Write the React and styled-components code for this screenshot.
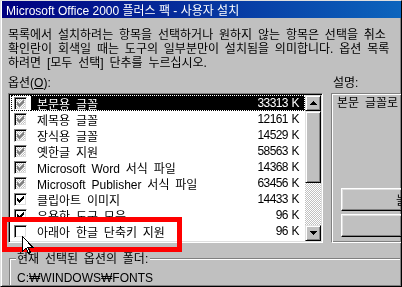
import styled, { createGlobalStyle, css } from "styled-components";

const GlobalStyle = createGlobalStyle`
  html, body {
    margin: 0;
    padding: 0;
    background: #c0c0c0;
  }
  body {
    font-family: "Liberation Sans", "Noto Sans CJK KR", sans-serif;
    font-size: 12px;
    color: #000;
  }
`;

const items = [
  { name: "본문용 글꼴", size: "33313 K", state: "gray", selected: true },
  { name: "제목용 글꼴", size: "12161 K", state: "gray" },
  { name: "장식용 글꼴", size: "14529 K", state: "gray" },
  { name: "옛한글 지원", size: "58563 K", state: "gray" },
  { name: "Microsoft Word 서식 파일", size: "14368 K", state: "gray" },
  { name: "Microsoft Publisher 서식 파일", size: "63456 K", state: "gray" },
  { name: "클립아트 이미지", size: "14433 K", state: "on" },
  { name: "유용한 도구 모음", size: "96 K", state: "on" },
  { name: "아래아 한글 단축키 지원", size: "96 K", state: "off" },
];

const raised = css`
  border: 1px solid;
  border-color: #dfdfdf #000 #000 #dfdfdf;
  box-shadow: inset 1px 1px #fff, inset -1px -1px #808080;
`;

const Window = styled.div`
  position: relative;
  width: 402px;
  height: 287px;
  box-sizing: border-box;
  background: #c0c0c0;
  border: 1px solid;
  border-color: #dfdfdf #000 #000 #dfdfdf;
  box-shadow: inset 1px 1px #fff, inset -1px -1px #808080;
  padding: 1px;
  overflow: hidden;
  display: flex;
  flex-direction: column;
`;

const TitleBar = styled.div`
  flex-shrink: 0;
  width: 520px;
  height: 17px;
  margin-top: -1px;
  display: flex;
  align-items: center;
  padding-left: 4px;
  background: linear-gradient(to right, #000080, #1084d0);
  color: #fff;
  font-size: 12px;
  white-space: nowrap;
`;

const Body = styled.div`
  flex: 1;
  padding: 10px 0 0 6px;
  display: flex;
  flex-direction: column;
  white-space: nowrap;
  word-spacing: 2.5px;
`;

const Intro = styled.div`
  line-height: 14px;
`;

const Columns = styled.div`
  display: flex;
  margin-top: 6px;
`;

const LeftCol = styled.div`
  width: 315px;
  flex-shrink: 0;
  display: flex;
  flex-direction: column;
`;

const RightCol = styled.div`
  width: 170px;
  flex-shrink: 0;
  margin-left: 8px;
  display: flex;
  flex-direction: column;
`;

const Label = styled.div`
  line-height: 14px;
  margin-bottom: 3px;
  padding-left: ${(p) => p.$indent || 0}px;
`;

const Key = styled.span`
  text-decoration: underline;
`;

const ListBox = styled.div`
  height: 150px;
  box-sizing: border-box;
  display: flex;
  border: 1px solid;
  border-color: #808080 #fff #fff #808080;
  box-shadow: inset 1px 1px #000, inset -1px -1px #dfdfdf;
  padding: 1px;
  background: #fff;
`;

const Rows = styled.div`
  flex: 1;
  display: flex;
  flex-direction: column;
`;

const Row = styled.div`
  position: relative;
  height: 16px;
  display: flex;
  align-items: center;
  ${(p) =>
    p.$selected &&
    css`
      &::after {
        content: "";
        position: absolute;
        inset: 0 0 0 1px;
        border: 1px dotted #fff;
        mix-blend-mode: difference;
      }
    `}
`;

const CheckCell = styled.div`
  width: 17px;
  height: 16px;
  padding-left: 4px;
  display: flex;
  align-items: center;
`;

const TextCell = styled.div`
  flex: 1;
  height: 16px;
  display: flex;
  align-items: center;
  justify-content: space-between;
  padding: 0 6px;
  background: ${(p) => (p.$selected ? "#000" : "transparent")};
  color: ${(p) => (p.$selected ? "#fff" : "#000")};
`;

const Size = styled.span`
  letter-spacing: -0.6px;
  word-spacing: 1px;
`;

const hatch = css`
  background-image: repeating-conic-gradient(#c0c0c0 0 25%, #fff 0 50%);
  background-size: 2px 2px;
`;

const CheckBox = styled.div`
  width: 13px;
  height: 13px;
  box-sizing: border-box;
  border: 1px solid;
  border-color: #808080 #fff #fff #808080;
  box-shadow: inset 1px 1px #000, inset -1px -1px #dfdfdf;
  padding: 2px;
  background: #fff;
  ${(p) => p.$state === "gray" && hatch}
  display: flex;
  align-items: center;
  justify-content: center;
`;

const ScrollBar = styled.div`
  width: 16px;
  display: flex;
  flex-direction: column;
  ${hatch}
`;

const ScrollButton = styled.div`
  height: 16px;
  box-sizing: border-box;
  background: #c0c0c0;
  ${raised}
  display: flex;
  align-items: center;
  justify-content: center;
`;

const Thumb = styled.div`
  height: 72px;
  box-sizing: border-box;
  background: #c0c0c0;
  ${raised}
`;

const Track = styled.div`
  flex: 1;
`;

const InfoBox = styled.div`
  height: 150px;
  box-sizing: border-box;
  border: 1px solid;
  border-color: #808080 #fff #fff #808080;
  box-shadow: inset 1px 1px #fff, inset -1px -1px #808080;
  padding: 2px 4px 5px 9px;
  display: flex;
  flex-direction: column;
`;

const InfoText = styled.div`
  line-height: 14px;
  margin-left: -4px;
`;

const Buttons = styled.div`
  margin-top: auto;
  display: flex;
  flex-direction: column;
  gap: 3px;
`;

const Button = styled.div`
  height: 23px;
  box-sizing: border-box;
  border: 1px solid;
  border-color: #fff #000 #000 #fff;
  box-shadow: inset -1px -1px #808080, inset 1px 1px #dfdfdf;
  display: flex;
  align-items: center;
  padding-left: 54px;
`;

const GroupBox = styled.div`
  margin: 15px 0 0 1px;
  flex: 1;
  border-top: 1px solid #808080;
  border-left: 1px solid #808080;
  box-shadow: inset 1px 1px #fff;
  padding-left: 6px;
  display: flex;
  flex-direction: column;
`;

const Legend = styled.div`
  align-self: flex-start;
  margin-top: -6px;
  padding: 0 2px 0 1px;
  background: #c0c0c0;
  line-height: 13px;
`;

const Path = styled.div`
  margin-top: 6px;
  padding-left: 1px;
  line-height: 13px;
`;

const Highlight = styled.div`
  position: absolute;
  left: 1px;
  top: 216px;
  width: 180px;
  height: 35px;
  box-sizing: border-box;
  border: 5px solid #f00;
`;

const Cursor = styled.svg`
  position: absolute;
  left: 21px;
  top: 235px;
`;

function Check({ color }) {
  const cols = [2, 3, 4, 3, 2, 1, 0];
  return (
    <svg width="7" height="7" viewBox="0 0 7 7" shapeRendering="crispEdges">
      {cols.map((y, x) => (
        <rect key={x} x={x} y={y} width="1" height="3" fill={color} />
      ))}
    </svg>
  );
}

function Arrow({ up }) {
  return (
    <svg width="7" height="4" viewBox="0 0 7 4" shapeRendering="crispEdges">
      {[0, 1, 2, 3].map((i) => (
        <rect key={i} x={3 - i} y={up ? i : 3 - i} width={1 + i * 2} height="1" fill="#000" />
      ))}
    </svg>
  );
}

export default function App() {
  return (
    <>
      <GlobalStyle />
      <Window>
        <TitleBar>Microsoft Office 2000 플러스 팩 - 사용자 설치</TitleBar>
        <Body>
          <Intro>
            <div>목록에서 설치하려는 항목을 선택하거나 원하지 않는 항목은 선택을 취소</div>
            <div>확인란이 회색일 때는 도구의 일부분만이 설치됨을 의미합니다. 옵션 목록</div>
            <div>하려면 [모두 선택] 단추를 누르십시오.</div>
          </Intro>
          <Columns>
            <LeftCol>
              <Label>
                옵션(<Key>O</Key>):
              </Label>
              <ListBox>
                <Rows>
                  {items.map((it) => (
                    <Row key={it.name} $selected={it.selected}>
                      <CheckCell>
                        <CheckBox $state={it.state}>
                          {it.state !== "off" && (
                            <Check color={it.state === "gray" ? "#808080" : "#000"} />
                          )}
                        </CheckBox>
                      </CheckCell>
                      <TextCell $selected={it.selected}>
                        <span>{it.name}</span>
                        <Size>{it.size}</Size>
                      </TextCell>
                    </Row>
                  ))}
                </Rows>
                <ScrollBar>
                  <ScrollButton>
                    <Arrow up />
                  </ScrollButton>
                  <Thumb />
                  <Track />
                  <ScrollButton>
                    <Arrow />
                  </ScrollButton>
                </ScrollBar>
              </ListBox>
            </LeftCol>
            <RightCol>
              <Label $indent={2}>설명:</Label>
              <InfoBox>
                <InfoText>본문 글꼴로 사용되는 글꼴입니다.</InfoText>
                <Buttons>
                  <Button>늘</Button>
                  <Button />
                </Buttons>
              </InfoBox>
            </RightCol>
          </Columns>
          <GroupBox>
            <Legend>현재 선택된 옵션의 폴더:</Legend>
            <Path>C:₩WINDOWS₩FONTS</Path>
          </GroupBox>
        </Body>
        <Highlight />
        <Cursor width="12" height="19" viewBox="0 0 12 19" shapeRendering="crispEdges">
          <path
            d="M0.5 0.5 L0.5 15.5 L4 12 L6.5 17.5 L8.5 16.5 L6 11.5 L11 11.5 Z"
            fill="#fff"
            stroke="#000"
            strokeWidth="1"
          />
        </Cursor>
      </Window>
    </>
  );
}
